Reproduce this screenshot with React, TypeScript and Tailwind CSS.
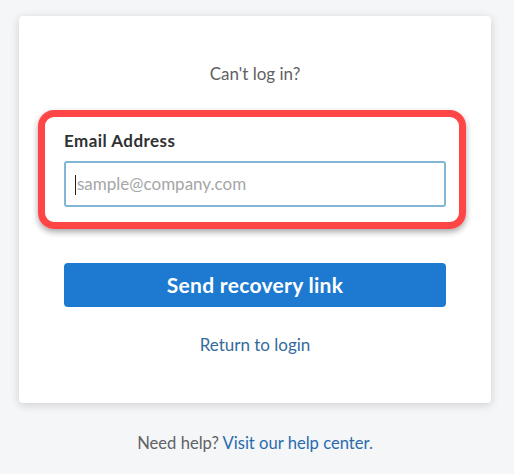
import React from "react";

export default function App() {
  return (
    <div
      className="min-h-[474px] w-full bg-[#f5f6f8] pt-4 px-[19px]"
      style={{ fontFamily: "Lato, 'Noto Sans', sans-serif" }}
    >
      <div className="w-[472px] bg-white rounded-[4px] shadow-[0_2px_10px_rgba(0,0,0,0.16)] pt-[46px] pb-[46px] flex flex-col">
        <p className="text-center text-[17px] leading-6 text-[#5f6163]">Can't log in?</p>

        <div className="mt-6 mx-[19px] w-[428px] border-[7px] border-[#ff4646] rounded-[16px] shadow-[0_3px_6px_rgba(0,0,0,0.35)] pt-3 pb-[15px] pl-[19px] pr-[13px]">
          <label className="block text-[17px] leading-6 font-bold text-[#2f3133] tracking-[0.45px]">
            Email Address
          </label>
          <div className="relative mt-2 h-[46px] w-[382px] border-2 border-[#82b6d6] rounded-[3px] flex items-center">
            <span className="absolute left-[9px] top-[12px] h-[20px] w-px bg-[#222]" />
            <span className="pl-[11px] text-[17px] text-[#a4a6a8]">sample@company.com</span>
          </div>
        </div>

        <button className="mt-[34px] mx-[45px] h-[44px] w-[382px] rounded-[4px] bg-[#1d7ad0] text-white text-[21px] font-bold tracking-[0.3px]">
          Send recovery link
        </button>

        <a className="mt-[26px] text-center text-[17px] leading-6 text-[#336b9c]">Return to login</a>
      </div>

      <p className="mt-[28px] w-[472px] text-center text-[16.6px] leading-6 text-[#606264]">
        Need help? <a className="text-[#2a6bad]">Visit our help center.</a>
      </p>
    </div>
  );
}
